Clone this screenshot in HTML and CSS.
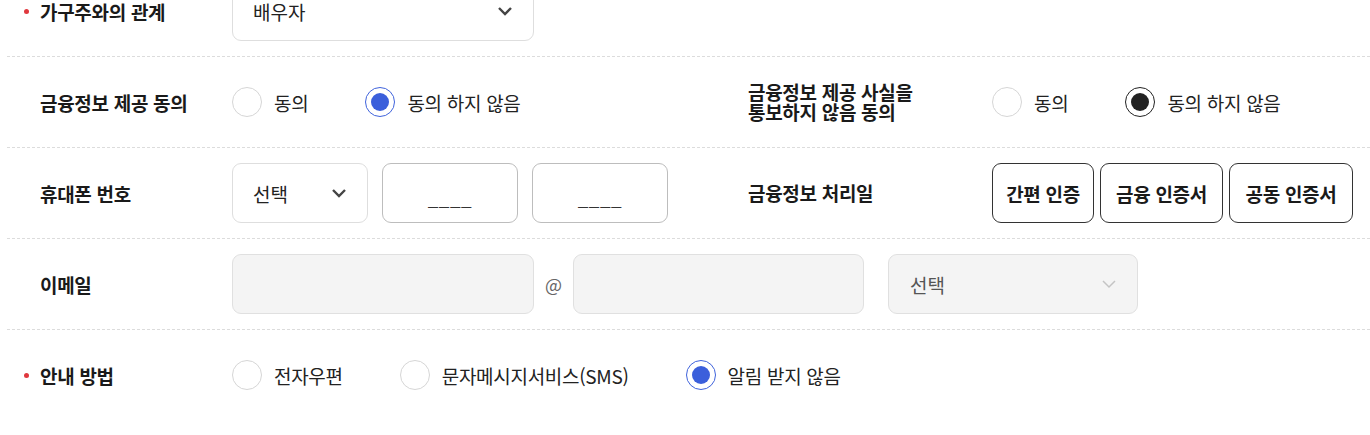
FILE: index.html
```html
<!DOCTYPE html>
<html lang="ko">
<head>
<meta charset="utf-8">
<link rel="stylesheet" href="styles.css">
</head>
<body>
<div class="form">
  <div class="row">
    <div class="field">
      <div class="label required">가구주와의 관계</div>
      <div class="controls">
        <div class="select select-lg"><span>배우자</span>
          <svg class="chev" width="16" height="10" viewBox="0 0 16 10"><path d="M2 2l6 6 6-6" fill="none" stroke="#444" stroke-width="2.4"/></svg>
        </div>
      </div>
    </div>
  </div>

  <div class="row">
    <div class="field half">
      <div class="label">금융정보 제공 동의</div>
      <div class="controls">
        <label class="opt"><span class="radio"></span>동의</label>
        <label class="opt"><span class="radio checked"></span>동의 하지 않음</label>
      </div>
    </div>
    <div class="field">
      <div class="label label-r">금융정보 제공 사실을<br>통보하지 않음 동의</div>
      <div class="controls">
        <label class="opt"><span class="radio"></span>동의</label>
        <label class="opt"><span class="radio checked dark"></span>동의 하지 않음</label>
      </div>
    </div>
  </div>

  <div class="row">
    <div class="field half">
      <div class="label">휴대폰 번호</div>
      <div class="controls gap14">
        <div class="select select-sm"><span>선택</span>
          <svg class="chev" width="16" height="10" viewBox="0 0 16 10"><path d="M2 2l6 6 6-6" fill="none" stroke="#444" stroke-width="2.4"/></svg>
        </div>
        <div class="box phone"><span class="blank">____</span></div>
        <div class="box phone"><span class="blank">____</span></div>
      </div>
    </div>
    <div class="field">
      <div class="label label-r">금융정보 처리일</div>
      <div class="controls gap6">
        <button class="btn btn-a">간편 인증</button>
        <button class="btn btn-b">금융 인증서</button>
        <button class="btn btn-c">공동 인증서</button>
      </div>
    </div>
  </div>

  <div class="row">
    <div class="field">
      <div class="label">이메일</div>
      <div class="controls">
        <div class="box grey mail1"></div>
        <span class="at">@</span>
        <div class="box grey mail2"></div>
        <div class="select grey mail3"><span class="muted">선택</span>
          <svg class="chev" width="16" height="10" viewBox="0 0 16 10"><path d="M2 2l6 6 6-6" fill="none" stroke="#c4c4c4" stroke-width="1.5"/></svg>
        </div>
      </div>
    </div>
  </div>

  <div class="row last">
    <div class="field">
      <div class="label required">안내 방법</div>
      <div class="controls">
        <label class="opt"><span class="radio"></span>전자우편</label>
        <label class="opt"><span class="radio"></span>문자메시지서비스(SMS)</label>
        <label class="opt"><span class="radio checked"></span>알림 받지 않음</label>
      </div>
    </div>
  </div>
</div>
</body>
</html>
```

FILE: styles.css
```css
* { box-sizing: border-box; }
html, body { margin: 0; padding: 0; background: #fff; }
body {
  font-family: "Noto Sans CJK KR", "Noto Sans", sans-serif;
  color: #222;
  font-size: 19px;
  overflow: hidden;
}
.form {
  margin-top: -34px;
  padding-left: 7px;
}
.row {
  display: flex;
  align-items: center;
  min-height: 91px;
  padding: 15px 0 16px;
  background-image: repeating-linear-gradient(to right, #dcdcdc 0 3px, transparent 3px 5px);
  background-size: 100% 1px;
  background-repeat: no-repeat;
  background-position: left bottom;
}
.row.last { background-image: none; }
.field {
  display: flex;
  align-items: center;
}
.field.half { width: 708px; }
.label {
  position: relative;
  width: 225px;
  flex: none;
  padding-left: 33px;
  font-weight: 700;
  font-size: 19px;
  line-height: 21px;
  color: #1a1a1a;
  letter-spacing: -0.3px;
}
.label-r { width: 277px; line-height: 20px; }
.label.required::before {
  content: "";
  position: absolute;
  left: 17px;
  top: 8px;
  width: 5px;
  height: 5px;
  border-radius: 50%;
  background: #e0383e;
}
.controls {
  display: flex;
  align-items: center;
}
.gap14 { gap: 14px; }
.gap6 { gap: 6px; }
.select, .box {
  height: 60px;
  border: 1px solid #dedede;
  border-radius: 9px;
  display: flex;
  align-items: center;
  background: #fff;
}
.select {
  justify-content: space-between;
  padding: 0 20px 0 20px;
}
.select-lg { width: 302px; }
.select-sm { width: 136px; }
.chev { display: block; }
.phone {
  width: 136px;
  border-color: #bdbdbd;
  justify-content: center;
  align-items: flex-end;
  padding-bottom: 15px;
}
.blank { color: #333; line-height: 20px; letter-spacing: 0.5px; }
.grey { background: #f4f4f4; border-color: #e0e0e0; }
.mail1 { width: 302px; }
.mail2 { width: 291px; }
.mail3 { width: 250px; margin-left: 24px; padding-left: 21px; padding-right: 20px; }
.muted { color: #555; }
.at {
  width: 39px;
  text-align: center;
  color: #666;
  font-size: 18px;
}
.opt {
  display: flex;
  align-items: center;
  margin-right: 57px;
  font-size: 19px;
  color: #222;
  letter-spacing: -0.3px;
}
.radio {
  width: 30px;
  height: 30px;
  border-radius: 50%;
  border: 1.5px solid #d6d6d6;
  margin-right: 12px;
  flex: none;
  display: flex;
  align-items: center;
  justify-content: center;
  background: #fff;
}
.radio.checked { border-color: #3f63dc; }
.radio.checked::after {
  content: "";
  width: 18px;
  height: 18px;
  border-radius: 50%;
  background: #3b5fdb;
}
.radio.dark { border-color: #222; }
.radio.dark::after { background: #222; }
.btn {
  height: 60px;
  padding: 0;
  border: 1px solid #333;
  border-radius: 9px;
  background: #fff;
  font-family: inherit;
  font-weight: 700;
  font-size: 19px;
  color: #1a1a1a;
  letter-spacing: -0.3px;
  text-align: center;
}
.btn-a { width: 102px; }
.btn-b { width: 123px; }
.btn-c { width: 124px; }
```
